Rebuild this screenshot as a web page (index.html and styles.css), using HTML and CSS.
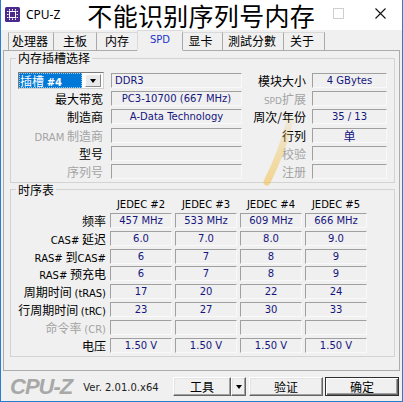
FILE: index.html
```html
<!DOCTYPE html>
<html lang="zh-CN">
<head>
<meta charset="utf-8">
<title>CPU-Z</title>
<link rel="stylesheet" href="styles.css">
</head>
<body>
<div class="window">
  <header class="titlebar">
    <svg class="app-icon" width="15" height="15" viewBox="0 0 15 15" aria-hidden="true">
      <rect width="15" height="15" rx="1.5" fill="#4a2a8e"/>
      <rect x="4.5" y="4.5" width="6" height="6" fill="none" stroke="#fff" stroke-width="1"/>
      <g fill="#fff">
        <rect x="4" y="2" width="1" height="1.5"/><rect x="7" y="2" width="1" height="1.5"/><rect x="10" y="2" width="1" height="1.5"/>
        <rect x="4" y="11.5" width="1" height="1.5"/><rect x="7" y="11.5" width="1" height="1.5"/><rect x="10" y="11.5" width="1" height="1.5"/>
        <rect x="2" y="4" width="1.5" height="1"/><rect x="2" y="7" width="1.5" height="1"/><rect x="2" y="10" width="1.5" height="1"/>
        <rect x="11.5" y="4" width="1.5" height="1"/><rect x="11.5" y="7" width="1.5" height="1"/><rect x="11.5" y="10" width="1.5" height="1"/>
      </g>
    </svg>
    <span class="app-name">CPU-Z</span>
    <span class="caption">不能识别序列号内存</span>
    <span class="ctl ctl-max">
      <svg width="11" height="11" viewBox="0 0 11 11" aria-hidden="true"><rect x="0.5" y="0.5" width="10" height="10" fill="none" stroke="#cfcfcf"/></svg>
    </span>
    <span class="ctl ctl-close">
      <svg width="11" height="11" viewBox="0 0 11 11" aria-hidden="true"><path d="M0.5 0.5 L10.5 10.5 M10.5 0.5 L0.5 10.5" stroke="#111" stroke-width="1.1"/></svg>
    </span>
  </header>

  <nav class="tabs">
    <span class="tab tab-cpu">处理器</span>
    <span class="tab tab-mb">主板</span>
    <span class="tab tab-mem">内存</span>
    <span class="tab tab-spd active">SPD</span>
    <span class="tab tab-gpu">显卡</span>
    <span class="tab tab-bench">測試分數</span>
    <span class="tab tab-about">关于</span>
  </nav>

  <main class="panel">
    <fieldset class="group">
      <legend>内存插槽选择</legend>
      <div class="slot-grid">
        <div class="combo">
          <span class="combo-value">插槽 <span class="en">#4</span></span>
          <span class="combo-btn"><span class="arrow"></span></span>
        </div>
        <div class="field left">DDR3</div>
        <div class="lbl lbl-r">模块大小</div>
        <div class="field">4 GBytes</div>

        <div class="lbl">最大带宽</div>
        <div class="field">PC3-10700 (667 MHz)</div>
        <div class="lbl lbl-r dim"><span class="en en-s">SPD</span>扩展</div>
        <div class="field"></div>

        <div class="lbl">制造商</div>
        <div class="field">A-Data Technology</div>
        <div class="lbl lbl-r">周次/年份</div>
        <div class="field">35 / 13</div>

        <div class="lbl dim"><span class="en">DRAM</span> 制造商</div>
        <div class="field"></div>
        <div class="lbl lbl-r">行列</div>
        <div class="field cjk">单</div>

        <div class="lbl">型号</div>
        <div class="field"></div>
        <div class="lbl lbl-r dim">校验</div>
        <div class="field"></div>

        <div class="lbl dim">序列号</div>
        <div class="field"></div>
        <div class="lbl lbl-r dim">注册</div>
        <div class="field"></div>
      </div>
    </fieldset>

    <fieldset class="group">
      <legend>时序表</legend>
      <div class="timing-grid">
        <div></div>
        <div class="hdr">JEDEC #2</div>
        <div class="hdr">JEDEC #3</div>
        <div class="hdr">JEDEC #4</div>
        <div class="hdr">JEDEC #5</div>

        <div class="tlbl">频率</div>
        <div class="field">457 MHz</div>
        <div class="field">533 MHz</div>
        <div class="field">609 MHz</div>
        <div class="field">666 MHz</div>

        <div class="tlbl"><span class="en">CAS#</span> 延迟</div>
        <div class="field">6.0</div>
        <div class="field">7.0</div>
        <div class="field">8.0</div>
        <div class="field">9.0</div>

        <div class="tlbl"><span class="en">RAS#</span> 到<span class="en">CAS#</span></div>
        <div class="field">6</div>
        <div class="field">7</div>
        <div class="field">8</div>
        <div class="field">9</div>

        <div class="tlbl"><span class="en">RAS#</span> 预充电</div>
        <div class="field">6</div>
        <div class="field">7</div>
        <div class="field">8</div>
        <div class="field">9</div>

        <div class="tlbl">周期时间 <span class="en">(tRAS)</span></div>
        <div class="field">17</div>
        <div class="field">20</div>
        <div class="field">22</div>
        <div class="field">24</div>

        <div class="tlbl">行周期时间 <span class="en">(tRC)</span></div>
        <div class="field">23</div>
        <div class="field">27</div>
        <div class="field">30</div>
        <div class="field">33</div>

        <div class="tlbl dim">命令率 <span class="en">(CR)</span></div>
        <div class="field"></div>
        <div class="field"></div>
        <div class="field"></div>
        <div class="field"></div>

        <div class="tlbl">电压</div>
        <div class="field">1.50 V</div>
        <div class="field">1.50 V</div>
        <div class="field">1.50 V</div>
        <div class="field">1.50 V</div>
      </div>
    </fieldset>
  </main>

  <footer class="footer">
    <span class="logo">CPU-Z</span>
    <span class="version">Ver. 2.01.0.x64</span>
    <div class="buttons">
      <span class="btn btn-tools">工具</span>
      <span class="btn btn-drop"><span class="arrow"></span></span>
      <span class="btn btn-validate">验证</span>
      <span class="btn btn-ok">确定</span>
    </div>
  </footer>

  <svg class="marker" width="403" height="402" viewBox="0 0 403 402" aria-hidden="true">
    <defs>
      <linearGradient id="ink" x1="0" y1="118" x2="0" y2="186" gradientUnits="userSpaceOnUse">
        <stop offset="0" stop-color="#f3c14e" stop-opacity="0.1"/>
        <stop offset="0.45" stop-color="#f3c14e" stop-opacity="0.38"/>
        <stop offset="1" stop-color="#f3c14e" stop-opacity="0.6"/>
      </linearGradient>
    </defs>
    <path d="M290 120 Q283 150 267 182" fill="none" stroke="url(#ink)" stroke-width="7" stroke-linecap="round"/>
  </svg>
</div>
</body>
</html>
```

FILE: styles.css
```css
* {
  box-sizing: border-box;
}

html,
body {
  margin: 0;
  padding: 0;
}

body {
  width: 403px;
  height: 402px;
  overflow: hidden;
  background: #f0f0f0;
  font-family: "Noto Sans CJK SC", sans-serif;
  font-size: 12px;
  color: #000;
}

.window {
  position: relative;
  width: 403px;
  height: 402px;
  display: flex;
  flex-direction: column;
  background: #f0f0f0;
  border: 1px solid #2a7bd2;
  border-top: 0;
}

/* ---------- title bar ---------- */
.titlebar {
  flex: none;
  height: 30px;
  display: flex;
  align-items: center;
  background: #fff;
  white-space: nowrap;
}

.titlebar > * {
  flex: none;
}

.app-icon {
  margin-left: 4px;
  margin-top: -1px;
}

.app-name {
  margin-left: 6px;
  font-family: "Noto Sans", sans-serif;
  font-size: 12px;
  line-height: 16px;
  color: #000;
}

.caption {
  margin-left: 27px;
  font-family: "Noto Sans CJK SC", sans-serif;
  font-size: 25px;
  line-height: 30px;
  letter-spacing: 0.3px;
  color: #000;
}

.ctl {
  height: 30px;
  display: flex;
  align-items: center;
  justify-content: center;
  margin-top: -3px;
}

.ctl-max {
  width: 40px;
  margin-left: auto;
}

.ctl-close {
  width: 44px;
}

/* ---------- tab strip ---------- */
.tabs {
  flex: none;
  height: 20px;
  display: flex;
  align-items: flex-end;
  padding-left: 7px;
  position: relative;
  z-index: 1;
}

.tab {
  height: 18px;
  margin-left: -1px;
  border: 1px solid #a9a9a9;
  border-top-color: #d9d9d9;
  border-bottom: 0;
  background: #f0f0f0;
  font-size: 12px;
  line-height: 16px;
  text-align: center;
  white-space: nowrap;
}

.tab:first-child {
  margin-left: 0;
}

.tab-cpu { width: 46px; padding-right: 2px; }
.tab-mb { width: 44px; }
.tab-mem { width: 42px; }
.tab-spd { width: 46px; }
.tab-gpu { width: 41px; padding-right: 4px; }
.tab-bench { width: 62px; padding-right: 2px; }
.tab-about { width: 42px; padding-right: 4px; }

.tab.active {
  height: 21px;
  margin-bottom: -1px;
  border-color: #d9d9d9;
  color: #2233cc;
  font-family: "DejaVu Sans", sans-serif;
  font-size: 10px;
  line-height: 18px;
  padding-bottom: 1px;
}

/* ---------- page panel ---------- */
.panel {
  flex: none;
  height: 321px;
  margin: 0 2px;
  padding: 0 0 0 6px;
  border: 1px solid #acacac;
  background: #f0f0f0;
}

.group {
  width: 385px;
  margin: 0;
  padding: 0;
  min-inline-size: 0;
  border: 1px solid #d3d3d3;
}

.group legend {
  margin-left: 5px;
  padding: 0 2px;
  font-size: 12px;
  line-height: 14px;
}

.group:first-child {
  padding: 8px 0 3px;
}

.group + .group {
  padding: 2px 0 3px;
}

.slot-grid {
  display: grid;
  grid-template-columns: 100px 131px 70px 75px;
  grid-auto-rows: 15px;
  row-gap: 3.2px;
}

.timing-grid {
  display: grid;
  grid-template-columns: 96px repeat(4, 62px);
  grid-template-rows: 11px;
  grid-auto-rows: 15px;
  column-gap: 3px;
  row-gap: 2.86px;
}

.lbl {
  padding-right: 8px;
  font-size: 12px;
  line-height: 15px;
  text-align: right;
  white-space: nowrap;
}

.lbl-r {
  padding-right: 6px;
}

.tlbl {
  padding-right: 1px;
  font-size: 12px;
  line-height: 15px;
  text-align: right;
  white-space: nowrap;
}

.dim {
  color: #a3a3a3;
}

.en {
  font-family: "DejaVu Sans", sans-serif;
  font-size: 10px;
}

.en-s {
  font-size: 9px;
}

.hdr {
  font-family: "DejaVu Sans", sans-serif;
  font-size: 10px;
  line-height: 11px;
  text-align: center;
  white-space: nowrap;
}

.field {
  height: 15px;
  border: 1px solid;
  border-color: #a0a0a0 #f9f9f9 #f9f9f9 #a0a0a0;
  background: #f0f0f0;
  font-family: "DejaVu Sans", "Noto Sans CJK SC", sans-serif;
  font-size: 10px;
  line-height: 13px;
  color: #15157e;
  text-align: center;
  white-space: nowrap;
  overflow: hidden;
}

.field.left {
  text-align: left;
  padding-left: 3px;
}

.field.cjk {
  font-family: "Noto Sans CJK SC", sans-serif;
  font-size: 12px;
}

/* ---------- slot combo box ---------- */
.combo {
  justify-self: end;
  width: 86px;
  height: 17px;
  margin: -1px 7px 0 0;
  display: flex;
  align-items: center;
  border: 1px solid #7a7a7a;
  border-right-color: #d0d0d0;
  border-bottom-color: #d0d0d0;
  background: #fff;
}

.combo-value {
  width: 63px;
  height: 15px;
  padding-left: 1px;
  background: #0078d7;
  color: #fff;
  font-size: 12px;
  line-height: 15px;
  white-space: nowrap;
  outline: 1px dotted #9cc9ef;
  outline-offset: -1px;
}

.combo-value .en {
  font-weight: bold;
}

.combo-btn {
  width: 16px;
  height: 13px;
  margin-left: 3px;
  display: flex;
  align-items: center;
  justify-content: center;
  border: 1px solid;
  border-color: #fff #8a8a8a #8a8a8a #fff;
  background: #e9e9e9;
}

.arrow {
  width: 0;
  height: 0;
  border-left: 3.5px solid transparent;
  border-right: 3.5px solid transparent;
  border-top: 4px solid #000;
}

/* ---------- footer ---------- */
.footer {
  flex: none;
  height: 30px;
  display: flex;
  align-items: center;
  padding-left: 9px;
}

.logo {
  font-family: "Liberation Sans", sans-serif;
  font-style: italic;
  font-weight: bold;
  font-size: 22px;
  letter-spacing: -1px;
  line-height: 24px;
  color: #a8a8a8;
  margin-top: 1px;
}

.version {
  margin-left: 11px;
  font-family: "DejaVu Sans", sans-serif;
  font-size: 10px;
  color: #222;
  margin-top: 2px;
}

.buttons {
  display: flex;
  margin-left: auto;
  margin-right: 3px;
  margin-top: 1px;
}

.btn {
  height: 19px;
  display: flex;
  align-items: center;
  justify-content: center;
  border: 1px solid;
  border-color: #fff #646464 #646464 #fff;
  box-shadow: inset -1px -1px #a0a0a0, inset 1px 1px #e3e3e3;
  background: #f0f0f0;
  font-size: 12px;
  line-height: 15px;
}

.btn-tools {
  width: 58px;
}

.btn-drop {
  width: 15px;
}

.btn-validate {
  width: 74px;
  margin-left: 3px;
}

.btn-ok {
  width: 74px;
  margin-left: 2px;
  border-color: #2e2e2e;
  box-shadow: inset 1px 1px #fff, inset -1px -1px #646464, inset -2px -2px #a0a0a0;
}

/* ---------- highlighter stroke drawn over the dialog ---------- */
.marker {
  position: absolute;
  left: -1px;
  top: 0;
  pointer-events: none;
}
```
